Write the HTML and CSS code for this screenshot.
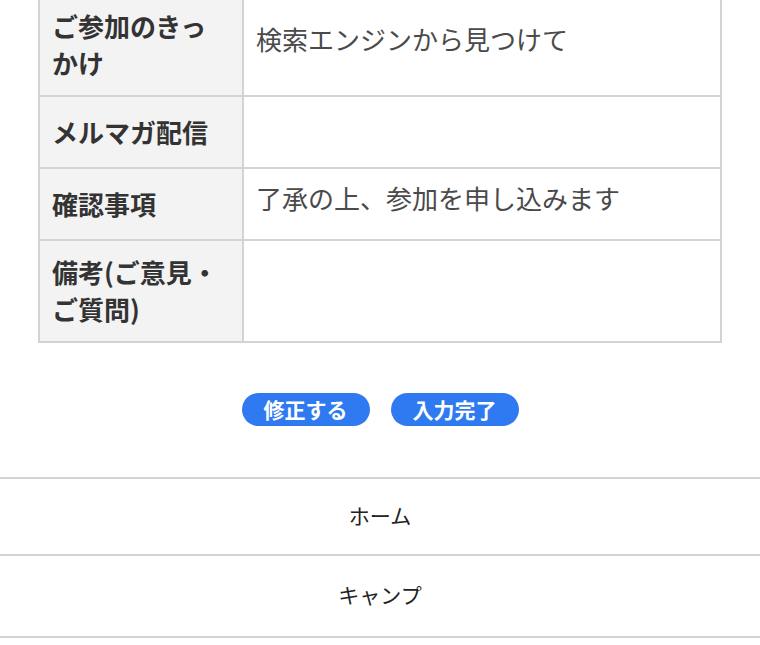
FILE: index.html
```html
<!DOCTYPE html>
<html lang="ja">
<head>
<meta charset="utf-8">
<title>確認画面</title>
<link rel="stylesheet" href="styles.css">
</head>
<body>
<div class="page">
  <table class="confirm">
    <tr>
      <th>ご参加のきっかけ</th>
      <td>検索エンジンから見つけて</td>
    </tr>
    <tr>
      <th>メルマガ配信</th>
      <td></td>
    </tr>
    <tr>
      <th>確認事項</th>
      <td>了承の上、参加を申し込みます</td>
    </tr>
    <tr>
      <th>備考(ご意見・ご質問)</th>
      <td></td>
    </tr>
  </table>

  <div class="actions">
    <button class="btn" type="button">修正する</button>
    <button class="btn" type="button">入力完了</button>
  </div>

  <nav class="menu">
    <a class="menu-item" href="#">ホーム</a>
    <a class="menu-item" href="#">キャンプ</a>
  </nav>
</div>
</body>
</html>
```

FILE: styles.css
```css
html, body {
  margin: 0;
  padding: 0;
  background: #ffffff;
}

body {
  font-family: "Noto Sans CJK JP", "Noto Sans", sans-serif;
  color: #333333;
  overflow: hidden;
}

.page {
  width: 760px;
}

.confirm {
  margin: -7px 38px 0;
  width: 684px;
  table-layout: fixed;
  border-collapse: collapse;
  border: 2px solid #d3d3d3;
}

.confirm tr {
  height: 72px;
}

.confirm th,
.confirm td {
  border: 2px solid #d3d3d3;
  font-size: 26px;
  line-height: 37px;
  vertical-align: middle;
  text-align: left;
}

.confirm th {
  width: 178px;
  padding: 12px 12px 14px;
  background: #f3f3f3;
  font-weight: 700;
  color: #333333;
}

.confirm td {
  padding: 7px 12px 20px;
  background: #ffffff;
  font-weight: 400;
  color: #4a4a4a;
}

.actions {
  display: flex;
  justify-content: center;
  gap: 21px;
  margin-top: 50px;
}

.btn {
  width: 128px;
  height: 33px;
  padding: 0;
  border: none;
  border-radius: 17px;
  background: #2f7af1;
  color: #ffffff;
  font-family: "Noto Sans CJK JP", "Noto Sans", sans-serif;
  font-size: 21px;
  font-weight: 700;
  line-height: 33px;
}

.menu {
  display: flex;
  flex-direction: column;
  margin-top: 51px;
  border-top: 2px solid #d3d3d3;
}

.menu-item {
  display: flex;
  align-items: center;
  justify-content: center;
  height: 71px;
  padding-bottom: 4px;
  border-bottom: 2px solid #d3d3d3;
  color: #222222;
  font-size: 21px;
  text-decoration: none;
}

.menu-item + .menu-item {
  height: 76px;
}
```
